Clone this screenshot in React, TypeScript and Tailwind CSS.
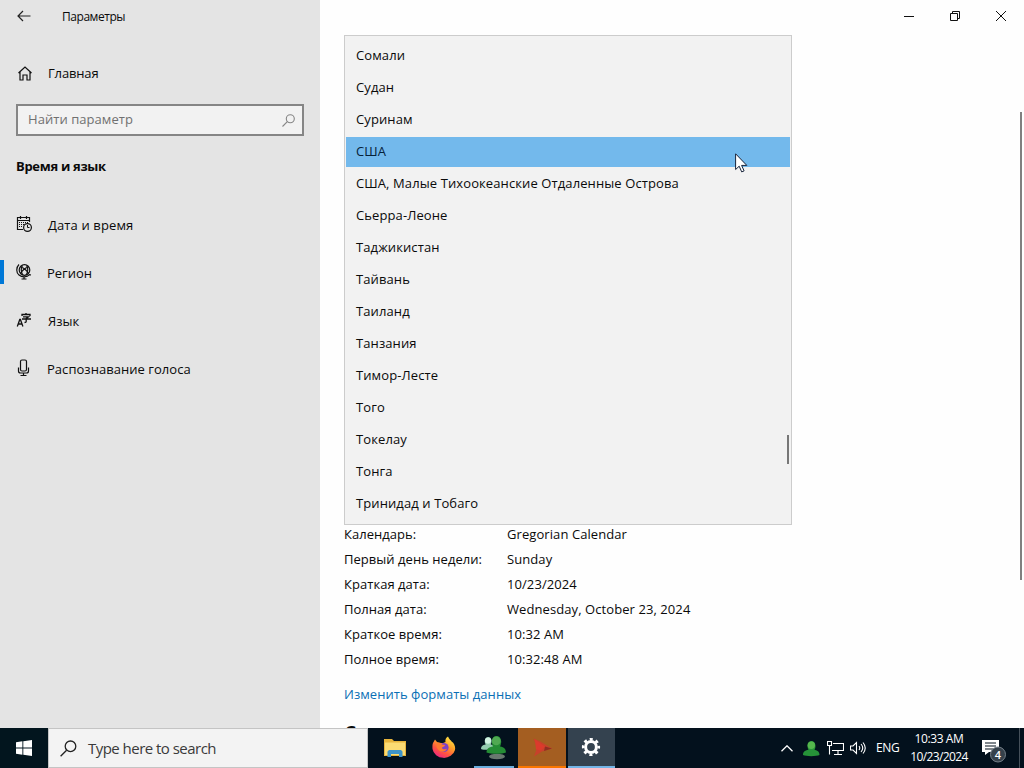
import React from 'react';

const countries = [
  'Сомали', 'Судан', 'Суринам', 'США', 'США, Малые Тихоокеанские Отдаленные Острова',
  'Сьерра-Леоне', 'Таджикистан', 'Тайвань', 'Таиланд', 'Танзания', 'Тимор-Лесте',
  'Того', 'Токелау', 'Тонга', 'Тринидад и Тобаго',
];

const formats = [
  ['Календарь:', 'Gregorian Calendar'],
  ['Первый день недели:', 'Sunday'],
  ['Краткая дата:', '10/23/2024'],
  ['Полная дата:', 'Wednesday, October 23, 2024'],
  ['Краткое время:', '10:32 AM'],
  ['Полное время:', '10:32:48 AM'],
];

const CalendarIcon = () => (
  <svg width="16" height="16" viewBox="0 0 16 16" fill="none" stroke="#111">
    <path d="M7 13.500H1.500V1.500h12V6M1.500 4.500h12M4.500 0v3M10.500 0v3" strokeWidth="1.200" />
    <path d="M3 6.500h9M3 8.500h5M3 10.500h4" strokeDasharray="1 1" />
    <circle cx="11.500" cy="11.500" r="3.900" strokeWidth="1.200" />
    <path d="M11.500 9v2.500h2" />
  </svg>
);

const GlobeIcon = () => (
  <svg width="16" height="16" viewBox="0 0 16 16" fill="none" stroke="#111" strokeWidth="1.2">
    <circle cx="8.500" cy="6" r="5.300" />
    <path d="M4.500 3c3 .5 7 4 8 6.500M12.500 3c-3 .5-7 4-8 6.500M6.500 1.500c-2 2-1.500 7 .5 9.500M10.500 1.500c2 2 1.500 7-.5 9.500" />
    <path d="M3 .5C0 3.500 0 8.500 3 11c3 2.500 8 2.500 10.500-.3l1.500.3M8 12.500V15M5.500 15h5" />
  </svg>
);

const LanguageIcon = () => (
  <svg width="16" height="16" viewBox="0 0 16 16" fill="none" stroke="#111" strokeWidth="1.300">
    <path d="M1.300 14.500 3.800 7.500h.6l2.500 7M2.300 12h3.600" />
    <path d="M6 4V2.500h8V4M10 1v1.500M7 4.800h5.500L10.200 6.500v3c0 .8-.5 1-1.700 1M6 7h9" />
  </svg>
);

const MicIcon = () => (
  <svg width="16" height="18" viewBox="0 0 16 18" fill="none" stroke="#111" strokeWidth="1.200">
    <rect x="4.500" y="1" width="6" height="11" rx="1.500" />
    <path d="M2.500 8.500V12c0 1.300.8 2 2 2h6c1.200 0 2-.7 2-2V8.500M7.500 14v2.500M4.500 16.500h6" />
  </svg>
);

const nav = [
  { label: 'Дата и время', icon: CalendarIcon, cls: 'tracking-[0.12px] pl-0.5' },
  { label: 'Регион', icon: GlobeIcon, cls: 'pl-px' },
  { label: 'Язык', icon: LanguageIcon, cls: 'pl-0.5' },
  { label: 'Распознавание голоса', icon: MicIcon, cls: 'pl-px tracking-[0.04px]' },
];

function Sidebar() {
  return (
    <aside className="flex w-80 shrink-0 flex-col bg-[#e4e4e4]">
      <header className="flex h-8 items-center pl-[17px]">
        <svg width="14" height="12" viewBox="0 0 14 12" fill="none" stroke="#222" strokeWidth="1.200">
          <path d="M13.500 6H1M6 1 1 6l5 5" />
        </svg>
        <span className="ml-[31px] pt-0.5 text-[12px] leading-[30px] tracking-[-0.45px]">Параметры</span>
      </header>
      <div className="mt-[17px] flex h-12 items-center pl-[18px]">
        <svg width="14" height="15" viewBox="0 0 14 15" fill="none" stroke="#111" strokeWidth="1.200">
          <path d="M.5 7 7 1l6.500 6M2 6v8h3V9h4v5h3V6" />
        </svg>
        <span className="ml-4 pt-0.5 tracking-[-0.15px]">Главная</span>
      </div>
      <div className="ml-4 mt-[7px] flex h-8 w-72 items-center justify-between border-2 border-[#858585] bg-[#f2f2f2] pl-2.5 pr-[7px] text-[#707070]">
        <span className="tracking-[0.05px]">Найти параметр</span>
        <svg width="13" height="13" viewBox="0 0 13 13" fill="none" stroke="#858585" strokeWidth="1.1">
          <circle cx="8.300" cy="4.700" r="4" />
          <path d="M5.300 7.700.5 12.500" />
        </svg>
      </div>
      <h2 className="ml-4 mt-5 text-[13px] font-bold leading-5 tracking-[-0.3px]">Время и язык</h2>
      <nav className="mt-[25px]">
        {nav.map(({ label, icon: Icon, cls }) => (
          <div key={label} className="flex h-12 items-center">
            <span className={label === 'Регион' ? 'mb-0.5 h-6 w-1 bg-[#0078d7]' : 'h-6 w-1'} />
            <span className="mb-0.5 ml-3 flex w-[30px]"><Icon /></span>
            <span className="pt-0.5"><span className={cls}>{label}</span></span>
          </div>
        ))}
      </nav>
    </aside>
  );
}

function CountryList() {
  return (
    <div className="absolute left-6 top-[35px] h-[490px] w-[448px] border border-[#cccccc] bg-[#f2f2f2] px-px pt-[3px]">
      {countries.map((c) => (
        <div key={c} className="h-8 pt-0.5 tracking-[0.1px]">
          <div className={c === 'США' ? 'h-[30px] bg-[#73b9ec] pl-2.5 leading-7 text-[#06213a]' : 'h-[30px] pl-2.5 leading-7'}>{c}</div>
        </div>
      ))}
      <span className="absolute right-[2px] top-[399px] h-[29px] w-0.5 bg-[#777]" />
      <svg className="absolute left-[390px] top-[117px]" width="13" height="20" viewBox="0 0 13 20">
        <path d="M.6.8v15.700l3.600-3.300 2.500 5.700 2.400-1-2.500-5.500h5.200z" fill="white" stroke="#17233a" />
      </svg>
    </div>
  );
}

function Content() {
  return (
    <main className="relative flex grow flex-col overflow-hidden bg-[#fefefe]">
      <header className="flex h-8 shrink-0 items-center justify-end pr-[18px]">
        <svg width="10" height="10" viewBox="0 0 10 10" stroke="#111"><path d="M0 5.500h10" /></svg>
        <svg className="ml-9" width="10" height="10" viewBox="0 0 10 10" fill="none" stroke="#111">
          <path d="M.5 2.500h7v7h-7zM2.500 2.500v-2h7v7h-2" />
        </svg>
        <svg className="ml-9" width="10" height="10" viewBox="0 0 10 10" stroke="#111"><path d="m0 0 10 10M10 0 0 10" /></svg>
      </header>
      <div className="flex h-[696px] shrink-0 justify-between overflow-hidden pt-20">
        <div className="pl-6 pt-[410px]">
          {formats.map(([k, v]) => (
            <div key={k} className="flex h-[25px] items-center">
              <span className="w-[163px] tracking-[0.04px]">{k}</span>
              <span className="tracking-[0.08px]">{v}</span>
            </div>
          ))}
          <a className="mt-3 block leading-5 tracking-[0.05px] text-[#0a6fb5]">Изменить форматы данных</a>
          <h3 className="mt-[15px] h-6 text-[19px] font-semibold leading-7">С</h3>
        </div>
        <span className="mr-0.5 h-[468px] w-0.5 bg-[#808080]" />
      </div>
      <CountryList />
    </main>
  );
}

function Person({ x, y, s, a, b }: { x: number; y: number; s: number; a: string; b: string }) {
  return (
    <g transform={`translate(${x} ${y}) scale(${s})`}>
      <path d="M0 14c0-3 1.500-4.500 5.500-5.200C3.500 5.500 4.500 0 8.500 0s5 5.500 3 8.800c3.500.7 5 2.200 5 5.200-3 1.500-13.500 1.500-16.500 0z" fill={b} />
      <circle cx="8.300" cy="4.200" r="3.700" fill={a} />
    </g>
  );
}

function Taskbar() {
  return (
    <footer className="flex h-10 shrink-0 bg-[#03111d] text-white">
      <div className="flex w-12 items-center justify-center bg-[#02151e]">
        <svg width="16" height="16" viewBox="0 0 16 16" fill="white">
          <path d="M0 2.200 6.400 1.300V7.500H0zM7.300 1.200 16 0v7.500H7.300zM0 8.400h6.400v6.300L0 13.800zM7.300 8.400H16V16l-8.700-1.200z" />
        </svg>
      </div>
      <div className="flex w-80 items-center border border-[#c4c4c4] bg-[#f3f3f3] pl-[11px] text-[#3a3a3a]">
        <svg width="17" height="17" viewBox="0 0 17 17" fill="none" stroke="#222" strokeWidth="1.3">
          <circle cx="10.500" cy="6.300" r="5.300" />
          <path d="M6.600 10.200.6 16.200" />
        </svg>
        <span className="ml-[11px] text-[15px] tracking-[-0.53px]">Type here to search</span>
      </div>
      <div className="flex w-[54px] items-center justify-center">
        <svg width="22" height="20" viewBox="0 0 22 20">
          <path d="M0 1h8l2 2h12v15H0z" fill="#e7b43c" />
          <path d="M1 4.500h20V17H1z" fill="#fbdb73" />
          <path d="M3.500 19v-5.500L5 12h12l1.500 1.500V19H15v-3H7v3z" fill="#3e94c9" />
        </svg>
      </div>
      <div className="flex w-[45px] items-center justify-center pr-0.5">
        <svg width="24" height="24" viewBox="0 0 24 24">
          <defs>
            <linearGradient id="fox" x1=".85" y1="0" x2=".25" y2="1">
              <stop offset="0" stopColor="#fff04a" />
              <stop offset=".4" stopColor="#ffa028" />
              <stop offset=".7" stopColor="#ff5440" />
              <stop offset="1" stopColor="#ed2386" />
            </linearGradient>
          </defs>
          <path d="M1 7 3 3.500l2 2.500 4 1c1 0 3 0 4.500-1C13 3.500 14 1.500 16 .5c1 2.500 3 4 4 5.500l1 .5c2 3 2.500 5 2 7.500A11.500 10.500 0 0 1 .5 13C.4 10 .3 9 1 7z" fill="url(#fox)" />
          <circle cx="12" cy="11.500" r="4.600" fill="#8040c4" />
          <path d="M4.500 7.500c2.500-1.500 4.500-.5 5.500 1l3 .5c0 1.500-2 1.500-3 2.500 0 2 2.500 2.500 5 1-1 3.500-6 4.500-9 1-1.200-1.500-2-4-1.500-6z" fill="#ff7a30" />
        </svg>
      </div>
      <div className="flex w-[51px] justify-center pl-0.5">
        <div className="flex w-10 justify-center border-b-2 border-[#69addd]">
          <svg className="mt-2" width="25" height="24" viewBox="0 0 25 24">
            <ellipse cx="16" cy="20.500" rx="8" ry="2.800" fill="#68786f" />
            <Person x={0} y={1} s={0.85} a="#d2f3e2" b="#94ccb0" />
            <Person x={5.5} y={0} s={1.18} a="#50a952" b="#258d35" />
          </svg>
        </div>
      </div>
      <div className="flex w-12 items-center justify-center border-b-2 border-[#fa7600] bg-[#a45e21]">
        <svg width="21" height="21" viewBox="0 0 21 21">
          <path d="m1.500 1.500 6 2.500L20 11.500l-10 3-8 5L5 11z" fill="#c8412b" />
          <path d="m3 2.500 10 7-4 4-5-1z" fill="#dc3a2c" />
          <path d="m13 9.500 7 2-8 2.500z" fill="#8f2f22" />
        </svg>
      </div>
      <div className="ml-[2px] flex w-[47px] items-center justify-center border-b-2 border-[#73b5e7] bg-[#34424f] pr-0.5">
        <svg width="20" height="20" viewBox="0 0 20 20" fill="none" stroke="white">
          <circle cx="10" cy="10" r="5.400" strokeWidth="3" />
          <circle cx="10" cy="10" r="7.800" strokeWidth="2.600" strokeDasharray="3.063 3.063" strokeDashoffset="1.531" />
        </svg>
      </div>
      <div className="flex grow items-center justify-end text-[12px]">
        <svg width="12" height="7" viewBox="0 0 12 7" fill="none" stroke="white" strokeWidth="1.300"><path d="m.5 6.300L6 .8l5.500 5.500" /></svg>
        <svg className="ml-2.5" width="17" height="17" viewBox="0 0 17 17"><Person x={0} y={1} s={1} a="#55b64d" b="#269338" /></svg>
        <svg className="ml-[7px]" width="17" height="14" viewBox="0 0 17 14" fill="none" stroke="white" strokeWidth="1.100">
          <path d="M6 2.500h10.500v7H5M.5.500h4v4h-4zM2.500 4.500v9M7 13.500h8M11 9.500v4" />
        </svg>
        <svg className="ml-1.5" width="17" height="14" viewBox="0 0 17 14" fill="none" stroke="white" strokeWidth="1.100">
          <path d="M.5 5h2.500l3.500-3.500v11L3 9H.5zM9 5q1.500 2 0 4M11 3q3.500 4 0 8M13 1.500q4.500 5.500 0 11" />
        </svg>
        <span className="ml-[9px] w-[25px] tracking-[-0.35px]">ENG</span>
        <div className="ml-[8px] w-[60px] whitespace-nowrap text-center leading-[18px]">
          <div className="tracking-[-0.4px]">10:33 AM</div>
          <div className="tracking-[-0.6px]">10/23/2024</div>
        </div>
        <svg className="ml-[13px] mt-1.5" width="24" height="24" viewBox="0 0 24 24">
          <path d="M0 1h17v12H7l-4 3v-3H0z" fill="white" />
          <path d="M3 4h11M3 7h11M3 10h8" stroke="#03111d" strokeWidth="1.100" />
          <circle cx="16" cy="15.500" r="7.500" fill="#35414b" stroke="#75808a" />
          <text x="16" y="19.500" fill="white" fontSize="11" fontWeight="600" textAnchor="middle">4</text>
        </svg>
        <span className="ml-[13px] h-10 w-px bg-[#45505a]" />
        <span className="w-1" />
      </div>
    </footer>
  );
}

export default function App() {
  return (
    <div className="flex h-[768px] w-[1024px] flex-col overflow-hidden font-['Open_Sans','Noto_Sans',sans-serif] text-[13px] text-[#0a0a0a]">
      <div className="flex min-h-0 grow">
        <Sidebar />
        <Content />
      </div>
      <Taskbar />
    </div>
  );
}
